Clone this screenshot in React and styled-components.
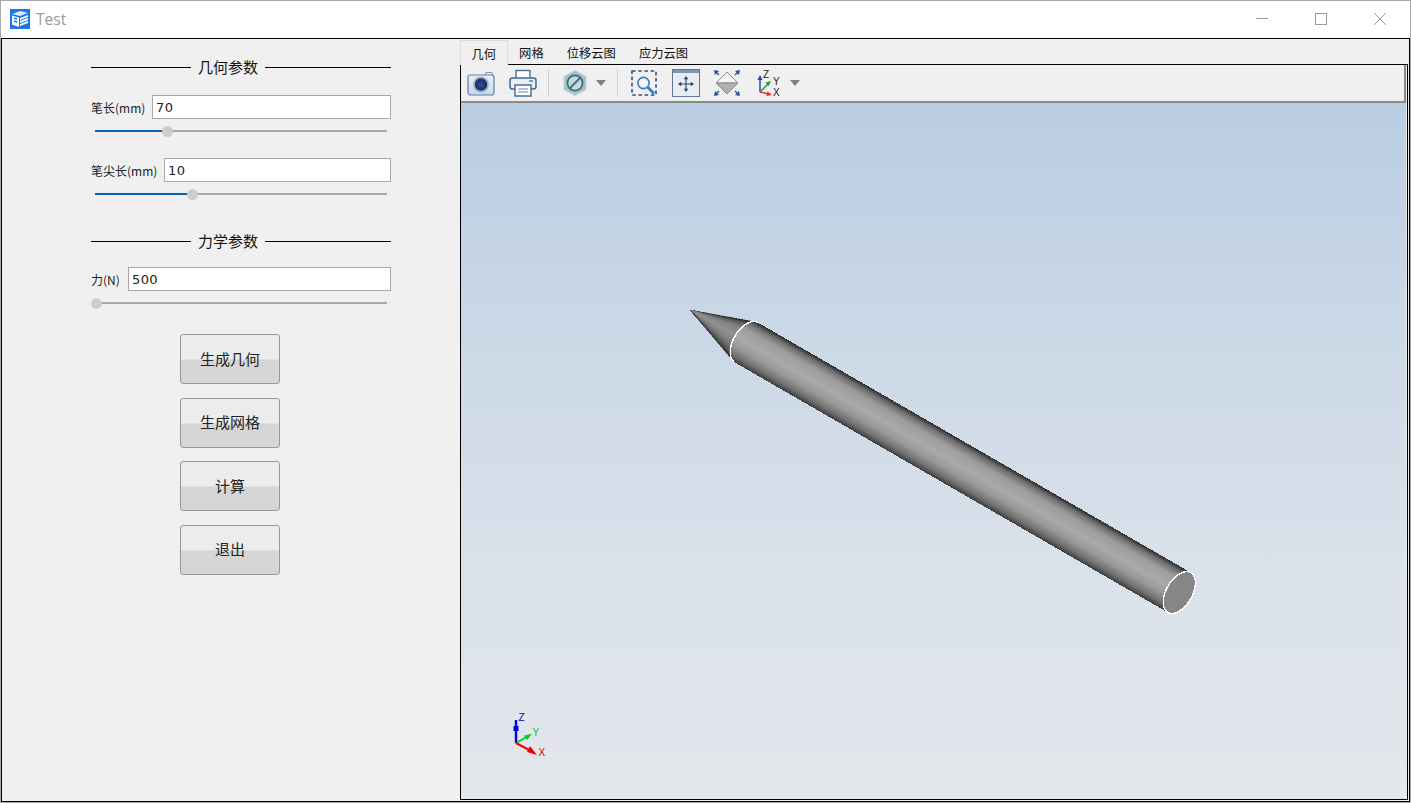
import React from "react";
import styled, { createGlobalStyle } from "styled-components";

const CJK = `"Noto Sans CJK SC", "Liberation Sans", sans-serif`;

const GlobalStyle = createGlobalStyle`
  html, body {
    margin: 0;
    padding: 0;
    overflow: hidden;
    background: #ffffff;
  }
  * {
    box-sizing: border-box;
  }
`;

const Window = styled.div`
  width: 1411px;
  height: 803px;
  border: 1px solid #aaaaaa;
  display: flex;
  flex-direction: column;
  background: #ffffff;
  font-family: ${CJK};
  color: #222222;
`;

// TITLE BAR
const TitleBar = styled.div`
  height: 37px;
  display: flex;
  align-items: center;
  padding: 0 1px 1px 9px;
  flex-shrink: 0;
`;

const AppTitle = styled.span`
  margin-left: 6px;
  font-family: "Open Sans", "Liberation Sans", sans-serif;
  font-size: 15.5px;
  color: #9a9a9a;
`;

const WindowControls = styled.div`
  margin-left: auto;
  display: flex;
  height: 100%;
`;

const WindowButton = styled.div`
  width: 59px;
  display: flex;
  align-items: center;
  justify-content: center;
`;

// BODY
const Body = styled.div`
  flex: 1;
  display: flex;
  border: 1px solid #000000;
  min-height: 0;
`;

const ParamsPanel = styled.div`
  width: 458px;
  flex-shrink: 0;
  background: #f0f0f0;
  padding: 18px 69px 0 89px;
  display: flex;
  flex-direction: column;
`;

const SectionHead = styled.div`
  display: flex;
  align-items: center;
  height: 20px;
  gap: 7px;
  margin-top: ${props => props.$top || 0}px;
  font-size: 15px;
  line-height: 20px;
  color: #111111;

  &::before {
    content: "";
    width: 100px;
    height: 1px;
    background: #000000;
  }
  &::after {
    content: "";
    flex: 1;
    height: 1px;
    background: #000000;
  }
`;

const Field = styled.div`
  display: grid;
  grid-template-columns: ${props => props.$label}px 1fr;
  align-items: center;
  height: 24px;
  margin-top: ${props => props.$top}px;
`;

const FieldLabel = styled.label`
  font-size: 12px;
  white-space: nowrap;
  color: #222222;
`;

const FieldInput = styled.input`
  width: 100%;
  height: 24px;
  border: 1px solid #a8a8a8;
  background: #ffffff;
  padding: 0 3px;
  font-family: "DejaVu Sans", sans-serif;
  font-size: 13px;
  letter-spacing: 0.4px;
  color: #222222;
  outline: none;
`;

const Slider = styled.div`
  position: relative;
  height: 10px;
  margin: 7px 4px 0;
  display: flex;
  align-items: center;
  background: linear-gradient(#a8a8a8, #a8a8a8) center / 100% 2px no-repeat;
`;

const SliderFill = styled.div`
  height: 2px;
  background: #0d62b0;
`;

const SliderThumb = styled.div`
  position: absolute;
  top: -0.5px;
  width: 11px;
  height: 11px;
  margin-left: -5.5px;
  border-radius: 50%;
  background: #cdcdcd;
`;

const Buttons = styled.div`
  display: flex;
  flex-direction: column;
  align-items: flex-start;
  gap: 13.5px;
  margin-top: 26px;
  padding-left: 89px;
`;

const ActionButton = styled.button`
  width: 100px;
  height: 50px;
  padding: 0 0 2px;
  border: 1px solid #999999;
  border-radius: 3px;
  background: linear-gradient(#ececec 0, #ececec 50%, #d5d5d5 52%, #d5d5d5 100%);
  font-family: ${CJK};
  font-size: 15px;
  color: #222222;
`;

// VIEW
const ViewPane = styled.div`
  flex: 1;
  min-width: 0;
  display: flex;
  flex-direction: column;
  background: #f0f0f0;
  padding: 1px 1px 1px 0;
`;

const TabBar = styled.div`
  display: flex;
  height: 24px;
  flex-shrink: 0;
`;

const Tab = styled.div`
  position: relative;
  z-index: 1;
  height: ${props => (props.$active ? 25 : 24)}px;
  padding: 1px 10.5px 0;
  display: flex;
  align-items: center;
  font-size: 12.3px;
  color: #111111;
  background: #f0f0f0;
  border: 1px solid ${props => (props.$active ? "#dcdcdc" : "transparent")};
  border-bottom: none;
`;

const ViewFrame = styled.div`
  flex: 1;
  min-height: 0;
  display: flex;
  flex-direction: column;
  border: 1px solid #000000;
`;

const Toolbar = styled.div`
  height: 38px;
  flex-shrink: 0;
  display: flex;
  align-items: center;
  padding-left: 6px;
  margin-right: 1px;
  border-right: 2px solid #888888;
  border-bottom: 2px solid #8a8a8a;
`;

const ToolGroup = styled.div`
  display: flex;
  align-items: center;
  gap: ${props => props.$gap}px;
`;

const ToolSeparator = styled.div`
  width: 1px;
  height: 28px;
  margin: 0 12px 0 11px;
  background: #cfcfcf;
`;

const DropArrow = styled.div`
  width: 0;
  height: 0;
  margin-left: ${props => props.$left}px;
  border-left: 5px solid transparent;
  border-right: 5px solid transparent;
  border-top: 6px solid #808080;
`;

const Viewport = styled.div`
  position: relative;
  flex: 1;
  min-height: 0;
  margin-right: 1px;
  background: linear-gradient(#b9cde2 0%, #c9d7e6 30%, #d9e1ea 65%, #e4e7ec 100%);
  overflow: hidden;
`;

const SceneSvg = styled.svg`
  position: absolute;
  left: 0;
  top: 0;
`;

const AxisLabel = styled.text`
  font-family: "Liberation Sans", sans-serif;
  font-size: ${props => props.$size}px;
  fill: ${props => props.$color};
`;

const AppIcon = () => (
  <svg width="20" height="20" viewBox="0 0 20 20">
    <rect width="20" height="20" fill="#1878e6" />
    <path d="M2 5 L10 2 L18 4 L10 7 Z" fill="#ffffff" opacity="0.85" />
    <path d="M2 6.5 L9 8.5 L9 18 L2 15.5 Z" fill="#ffffff" />
    <path d="M10 9 L18 6 L18 8 L10 11 Z M10 12 L18 9 L18 11 L10 14 Z M10 15 L18 12 L18 14 L10 17 Z" fill="#ffffff" />
    <path d="M4 9 L7 10 M4 12 L7 13" stroke="#1878e6" strokeWidth="1.4" />
  </svg>
);

const CameraIcon = () => (
  <svg width="28" height="28" viewBox="0 0 28 28">
    <defs>
      <linearGradient id="camBody" x1="0" y1="0" x2="0" y2="1">
        <stop offset="0" stopColor="#eaf0f7" />
        <stop offset="1" stopColor="#c8d8ea" />
      </linearGradient>
    </defs>
    <path d="M18 6 L19 3.5 L25 3.5 L26 6" fill="#dfe8f2" stroke="#7d97b5" />
    <rect x="1" y="6" width="26" height="20" rx="2.5" fill="url(#camBody)" stroke="#5f7fa6" strokeWidth="1.2" />
    <circle cx="14" cy="15.5" r="8" fill="#9db4d0" />
    <circle cx="14" cy="15.5" r="6.2" fill="#1d3568" />
    <circle cx="14" cy="15.5" r="3" fill="#27498c" />
  </svg>
);

const PrinterIcon = () => (
  <svg width="28" height="28" viewBox="0 0 28 28">
    <rect x="7" y="1.5" width="14" height="9" fill="#ffffff" stroke="#4c6f98" strokeWidth="1.4" />
    <rect x="1" y="9" width="26" height="11" rx="2.5" fill="#e8eef5" stroke="#3f6a98" strokeWidth="1.5" />
    <path d="M20 12 H24" stroke="#4c6f98" strokeWidth="1.3" />
    <rect x="6" y="16" width="16" height="11" fill="#ffffff" stroke="#4c6f98" strokeWidth="1.5" />
    <path d="M9 20 H19 M9 23 H19" stroke="#9aafc6" strokeWidth="1.4" />
  </svg>
);

const HideIcon = () => (
  <svg width="28" height="28" viewBox="0 0 28 28">
    <path d="M14 1.5 L25 7.5 L25 20.5 L14 26.5 L3 20.5 L3 7.5 Z" fill="#a8c0c2" stroke="#c2d2d3" strokeWidth="1" />
    <circle cx="14" cy="14" r="7.6" fill="#c8d8d9" stroke="#3a6f7f" strokeWidth="1.8" />
    <path d="M9 19 L19 9" stroke="#3a6f7f" strokeWidth="1.8" />
  </svg>
);

const ZoomBoxIcon = () => (
  <svg width="28" height="28" viewBox="0 0 28 28">
    <rect x="2" y="2" width="24" height="24" fill="none" stroke="#304f85" strokeWidth="1.6" strokeDasharray="3.6 2.6" />
    <circle cx="13.5" cy="14" r="5.6" fill="#eef4fa" stroke="#3a7eb8" strokeWidth="1.6" />
    <path d="M17.5 18 L24 24.5" stroke="#2a86cc" strokeWidth="2.8" />
  </svg>
);

const FitIcon = () => (
  <svg width="28" height="28" viewBox="0 0 28 28">
    <rect x="0.5" y="0.5" width="27" height="27" fill="#e9edf3" stroke="#66788f" />
    <rect x="1" y="1" width="26" height="3" fill="#7b96b5" />
    <path d="M14 9 V21 M8 15 H20" stroke="#20406e" strokeWidth="1.1" />
    <path d="M14 7 L11.8 10.2 H16.2 Z M14 23 L11.8 19.8 H16.2 Z M6 15 L9.2 12.8 V17.2 Z M22 15 L18.8 12.8 V17.2 Z" fill="#20406e" />
  </svg>
);

const IsoIcon = () => (
  <svg width="28" height="28" viewBox="0 0 28 28">
    <path d="M14 3 L25 14 L3 14 Z" fill="#f4f4f4" stroke="#8c8c8c" />
    <path d="M3 14 L25 14 L14 25 Z" fill="#b0b0b0" stroke="#8c8c8c" />
    <path d="M1 1 L6 2 L2 6 Z M27 1 L22 2 L26 6 Z M1 27 L6 26 L2 22 Z M27 27 L22 26 L26 22 Z" fill="#2d5288" />
    <path d="M3 3 L6 6 M25 3 L22 6 M3 25 L6 22 M25 25 L22 22" stroke="#2d5288" strokeWidth="1.4" />
  </svg>
);

const AxesIcon = () => (
  <svg width="28" height="28" viewBox="0 0 28 28">
    <path d="M5 23 V9" stroke="#1e3fc0" strokeWidth="1.4" />
    <path d="M5 6 L2.5 11 H7.5 Z" fill="#1e3fc0" />
    <path d="M5 23 L14 14" stroke="#1e9a3c" strokeWidth="1.4" />
    <path d="M16 12 L10.5 13.5 L13.5 17 Z" fill="#1e9a3c" />
    <path d="M5 23 L14 25" stroke="#e02a2a" strokeWidth="1.4" />
    <path d="M17 26 L11.5 27 L12.5 22.5 Z" fill="#e02a2a" />
    <AxisLabel x="8" y="9" $size={10} $color="#222222">Z</AxisLabel>
    <AxisLabel x="18" y="16" $size={10} $color="#222222">Y</AxisLabel>
    <AxisLabel x="18" y="27" $size={10} $color="#222222">X</AxisLabel>
  </svg>
);

// shading across the pen, 0 = upper edge, 1 = lower edge
const shadeStops = [
  [0, 42],
  [0.1, 110],
  [0.25, 156],
  [0.5, 170],
  [0.7, 152],
  [0.88, 112],
  [1, 60],
];

const shadeAt = (t) => {
  for (let i = 1; i < shadeStops.length; i++) {
    const [t0, v0] = shadeStops[i - 1];
    const [t1, v1] = shadeStops[i];
    if (t <= t1) return Math.round(v0 + ((t - t0) / (t1 - t0)) * (v1 - v0));
  }
  return 60;
};

const grey = (v) => `rgb(${v},${v},${v})`;

const coneSlices = Array.from({ length: 40 }, (_, i) => {
  const y0 = -23 + (46 * i) / 40;
  const y1 = -23 + (46 * (i + 1)) / 40;
  return { y0, y1, color: grey(Math.round(shadeAt((i + 0.5) / 40) * 0.85)) };
});

const PenScene = () => (
  <SceneSvg width="945" height="696" viewBox="461 103 945 696">
    <defs>
      <linearGradient id="penBody" gradientUnits="userSpaceOnUse" x1="0" y1="-23" x2="0" y2="23">
        {shadeStops.map(([t, v]) => (
          <stop key={t} offset={t} stopColor={grey(v)} />
        ))}
      </linearGradient>
    </defs>
    <g transform="translate(690 310) rotate(30)" shapeRendering="crispEdges">
      {coneSlices.map((s, i) => (
        <polygon key={i} points={`0,0 64,${s.y0} 64,${s.y1}`} fill={s.color} stroke={s.color} strokeWidth="0.4" />
      ))}
      <path d="M64 -23 L565 -23 L565 23 L64 23 A13 23 0 0 1 64 -23 Z" fill="url(#penBody)" />
      <path d="M64 23 A13 23 0 0 1 66 -23" fill="none" stroke="#ffffff" strokeWidth="1.4" />
      <ellipse cx="565" cy="0" rx="13" ry="23" fill="#868686" stroke="#ffffff" strokeWidth="1.4" />
    </g>
  </SceneSvg>
);

const AxisTriad = () => (
  <SceneSvg width="945" height="696" viewBox="461 103 945 696">
    <path d="M516 743 V720" stroke="#0000e6" strokeWidth="2.4" />
    <rect x="513.5" y="726" width="5" height="5" fill="#0000e6" />
    <path d="M516 743 L530 735" stroke="#00d020" strokeWidth="2" />
    <path d="M532 734 L524 735.5 L527 740 Z" fill="#00d020" />
    <path d="M516 743 L531 751" stroke="#f00000" strokeWidth="2" />
    <path d="M537 755 L527 752 L530 746 Z" fill="#f00000" />
    <AxisLabel x="518.5" y="721" $size={10} $color="#0000d0">Z</AxisLabel>
    <AxisLabel x="532.5" y="736" $size={10} $color="#20c030">Y</AxisLabel>
    <AxisLabel x="538.5" y="756" $size={10} $color="#e00000">X</AxisLabel>
  </SceneSvg>
);

const ParamSlider = ({ position }) => (
  <Slider>
    <SliderFill style={{ width: `${position * 100}%` }} />
    <SliderThumb style={{ left: `${position * 100}%` }} />
  </Slider>
);

const tabs = ["几何", "网格", "位移云图", "应力云图"];
const actions = ["生成几何", "生成网格", "计算", "退出"];

const App = () => {
  return (
    <Window>
      <GlobalStyle />
      <TitleBar>
        <AppIcon />
        <AppTitle>Test</AppTitle>
        <WindowControls>
          <WindowButton>
            <svg width="12" height="12" viewBox="0 0 12 12"><path d="M0 5.5 H12" stroke="#999999" /></svg>
          </WindowButton>
          <WindowButton>
            <svg width="12" height="12" viewBox="0 0 12 12"><rect x="0.5" y="0.5" width="11" height="11" fill="none" stroke="#999999" /></svg>
          </WindowButton>
          <WindowButton>
            <svg width="12" height="12" viewBox="0 0 12 12"><path d="M0 0 L12 12 M12 0 L0 12" stroke="#999999" /></svg>
          </WindowButton>
        </WindowControls>
      </TitleBar>
      <Body>
        <ParamsPanel>
          <SectionHead>几何参数</SectionHead>
          <Field $label={61} $top={18}>
            <FieldLabel>笔长(mm)</FieldLabel>
            <FieldInput defaultValue="70" />
          </Field>
          <ParamSlider position={0.247} />
          <Field $label={73} $top={22}>
            <FieldLabel>笔尖长(mm)</FieldLabel>
            <FieldInput defaultValue="10" />
          </Field>
          <ParamSlider position={0.335} />
          <SectionHead $top={32}>力学参数</SectionHead>
          <Field $label={37} $top={16}>
            <FieldLabel>力(N)</FieldLabel>
            <FieldInput defaultValue="500" />
          </Field>
          <ParamSlider position={0.004} />
          <Buttons>
            {actions.map(a => (
              <ActionButton key={a}>{a}</ActionButton>
            ))}
          </Buttons>
        </ParamsPanel>
        <ViewPane>
          <TabBar>
            {tabs.map((t, i) => (
              <Tab key={t} $active={i === 0}>{t}</Tab>
            ))}
          </TabBar>
          <ViewFrame>
            <Toolbar>
              <ToolGroup $gap={14}>
                <CameraIcon />
                <PrinterIcon />
              </ToolGroup>
              <ToolSeparator />
              <ToolGroup $gap={0}>
                <HideIcon />
                <DropArrow $left={7} />
              </ToolGroup>
              <ToolSeparator />
              <ToolGroup $gap={13.5}>
                <ZoomBoxIcon />
                <FitIcon />
                <IsoIcon />
                <AxesIcon />
              </ToolGroup>
              <DropArrow $left={7} />
            </Toolbar>
            <Viewport>
              <PenScene />
              <AxisTriad />
            </Viewport>
          </ViewFrame>
        </ViewPane>
      </Body>
    </Window>
  );
};

export default App;
